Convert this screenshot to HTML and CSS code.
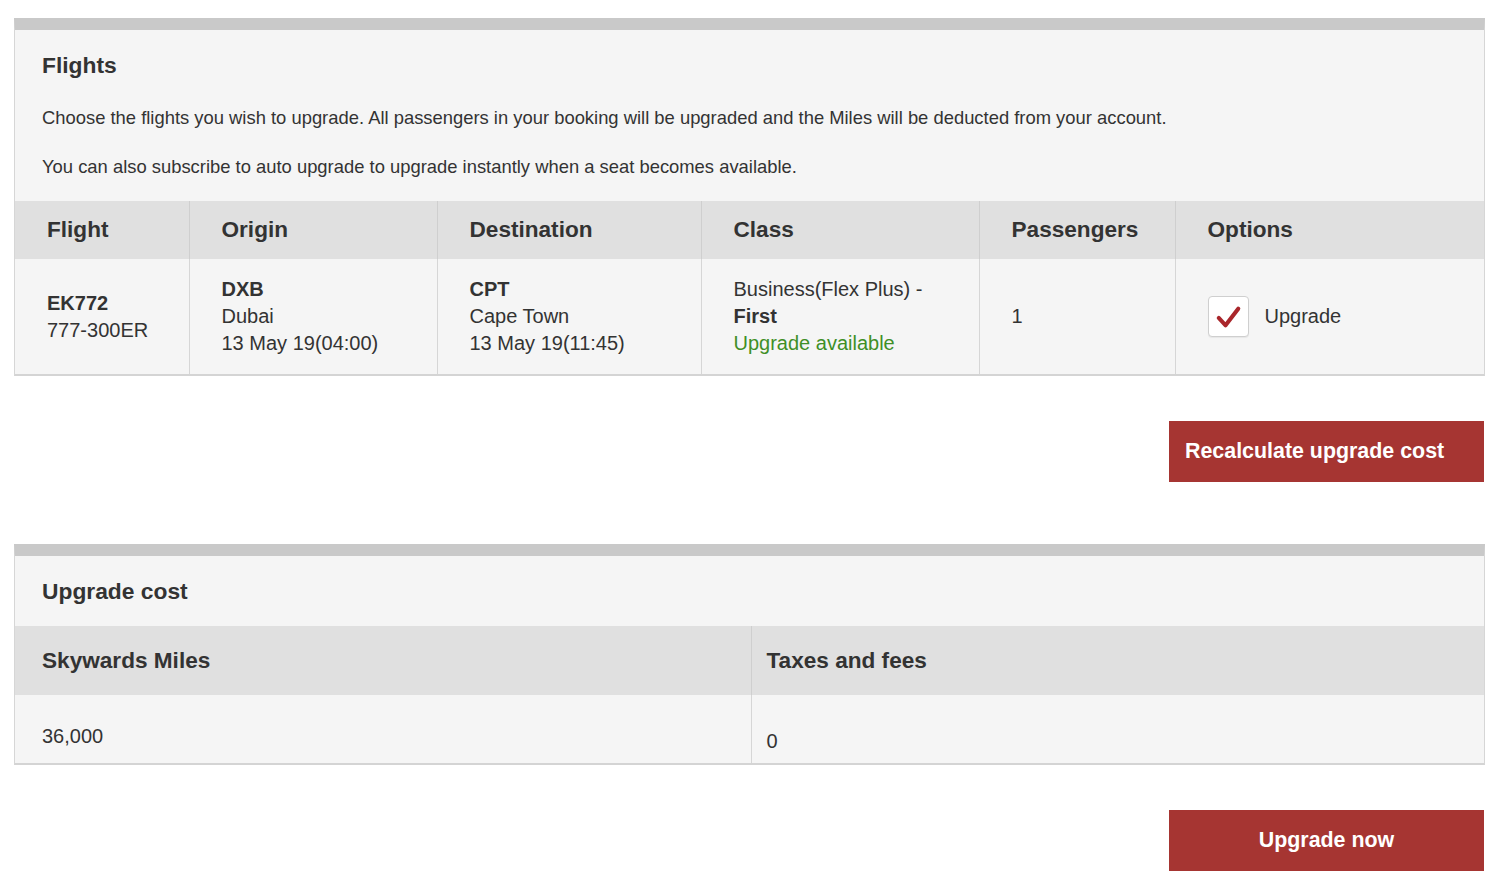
FILE: index.html
```html
<!DOCTYPE html>
<html lang="en">
<head>
<meta charset="utf-8">
<title>Upgrade flights</title>
<link rel="stylesheet" href="styles.css">
</head>
<body>
<div class="page">
  <section class="card">
    <div class="card-body">
      <h2 class="card-title">Flights</h2>
      <p class="intro">Choose the flights you wish to upgrade. All passengers in your booking will be upgraded and the Miles will be deducted from your account.</p>
      <p class="intro intro-last">You can also subscribe to auto upgrade to upgrade instantly when a seat becomes available.</p>
    </div>
    <table class="grid flights">
      <colgroup>
        <col class="c-flight"><col class="c-origin"><col class="c-dest"><col class="c-class"><col class="c-pax"><col class="c-opt">
      </colgroup>
      <thead>
        <tr><th>Flight</th><th>Origin</th><th>Destination</th><th>Class</th><th>Passengers</th><th>Options</th></tr>
      </thead>
      <tbody>
        <tr>
          <td><strong>EK772</strong><br>777-300ER</td>
          <td><strong>DXB</strong><br>Dubai<br>13 May 19(04:00)</td>
          <td><strong>CPT</strong><br>Cape Town<br>13 May 19(11:45)</td>
          <td>Business(Flex Plus) -<br><strong>First</strong><br><span class="avail">Upgrade available</span></td>
          <td>1</td>
          <td>
            <label class="check">
              <span class="box">
                <svg viewBox="0 0 40 40" width="40" height="40" aria-hidden="true"><path d="M10 21 L17 28.5 L30 11.5" fill="none" stroke="#a9262b" stroke-width="4.2" stroke-linecap="round" stroke-linejoin="round"/></svg>
              </span>
              <span>Upgrade</span>
            </label>
          </td>
        </tr>
      </tbody>
    </table>
  </section>

  <div class="actions actions-1">
    <button class="btn btn-left">Recalculate upgrade cost</button>
  </div>

  <section class="card card-2">
    <div class="card-body body-2">
      <h2 class="card-title">Upgrade cost</h2>
    </div>
    <table class="grid cost">
      <colgroup><col class="c-half"><col></colgroup>
      <thead>
        <tr><th class="miles">Skywards Miles</th><th class="taxes">Taxes and fees</th></tr>
      </thead>
      <tbody>
        <tr><td class="miles v1">36,000</td><td class="taxes v2">0</td></tr>
      </tbody>
    </table>
  </section>

  <div class="actions actions-2">
    <button class="btn">Upgrade now</button>
  </div>
</div>
</body>
</html>
```

FILE: styles.css
```css
* { box-sizing: border-box; }
html, body { margin: 0; padding: 0; background: #fff; }
body {
  font-family: "Liberation Sans", Arial, Helvetica, sans-serif;
  color: #333;
}
.page {
  width: 1471px;
  margin-left: 14px;
  padding-top: 18px;
}
.card {
  background: #f5f5f5;
  border-top: 12px solid #c9c9c9;
  border-left: 1px solid #d6d6d6;
  border-right: 1px solid #d6d6d6;
  border-bottom: 2px solid #d4d4d4;
}
.card-body {
  padding: 21px 27px 22px 27px;
}
.card-title {
  margin: 0;
  font-size: 22.8px;
  line-height: 28px;
  font-weight: 700;
  color: #333;
}
.intro {
  margin: 27px 0 0;
  font-size: 18.4px;
  line-height: 24px;
}
.intro + .intro { margin-top: 25px; }
.grid {
  width: 100%;
  border-collapse: collapse;
  table-layout: fixed;
}
.grid th {
  background: #e0e0e0;
  text-align: left;
  font-size: 22.6px;
  font-weight: 700;
  color: #333;
  padding: 0 0 0 32px;
  height: 58px;
  border-left: 1px solid #cfcfcf;
}
.grid td {
  font-size: 20px;
  line-height: 27px;
  padding: 0 0 0 32px;
  vertical-align: middle;
  border-left: 1px solid #d6d6d6;
  height: 115px;
}
.grid th:first-child, .grid td:first-child { border-left: none; }
.c-flight { width: 174px; }
.c-origin { width: 248px; }
.c-dest { width: 264px; }
.c-class { width: 278px; }
.c-pax { width: 196px; }
.avail { color: #3f8f26; }
.check {
  display: flex;
  align-items: center;
  gap: 16px;
}
.box {
  width: 41px;
  height: 41px;
  border: 1px solid #cfcfcf;
  border-radius: 4px;
  background: #fff;
  display: flex;
  align-items: center;
  justify-content: center;
  box-shadow: 0 1px 1px rgba(0,0,0,0.06);
}
.box svg { display: block; }
.actions {
  display: flex;
  justify-content: flex-end;
}
.actions-1 { padding-top: 45px; padding-bottom: 62px; }
.actions-2 { padding-top: 45px; }
.btn {
  width: 315px;
  height: 61px;
  border: none;
  background: #a63532;
  color: #fff;
  font-family: "Liberation Sans", Arial, Helvetica, sans-serif;
  font-weight: 700;
  font-size: 21.4px;
  text-align: center;
  padding: 0;
  margin-right: 1px;
}
.btn-left { text-align: left; padding-left: 16px; }
.body-2 { padding-top: 21px; padding-bottom: 21px; }
.c-half { width: 736px; }
.cost th { height: 69px; }
.cost td { height: 68px; vertical-align: top; }
.cost .miles { padding-left: 27px; }
.cost .taxes { padding-left: 15px; }
.cost .v1 { padding-top: 28px; }
.cost .v2 { padding-top: 33px; }
```
